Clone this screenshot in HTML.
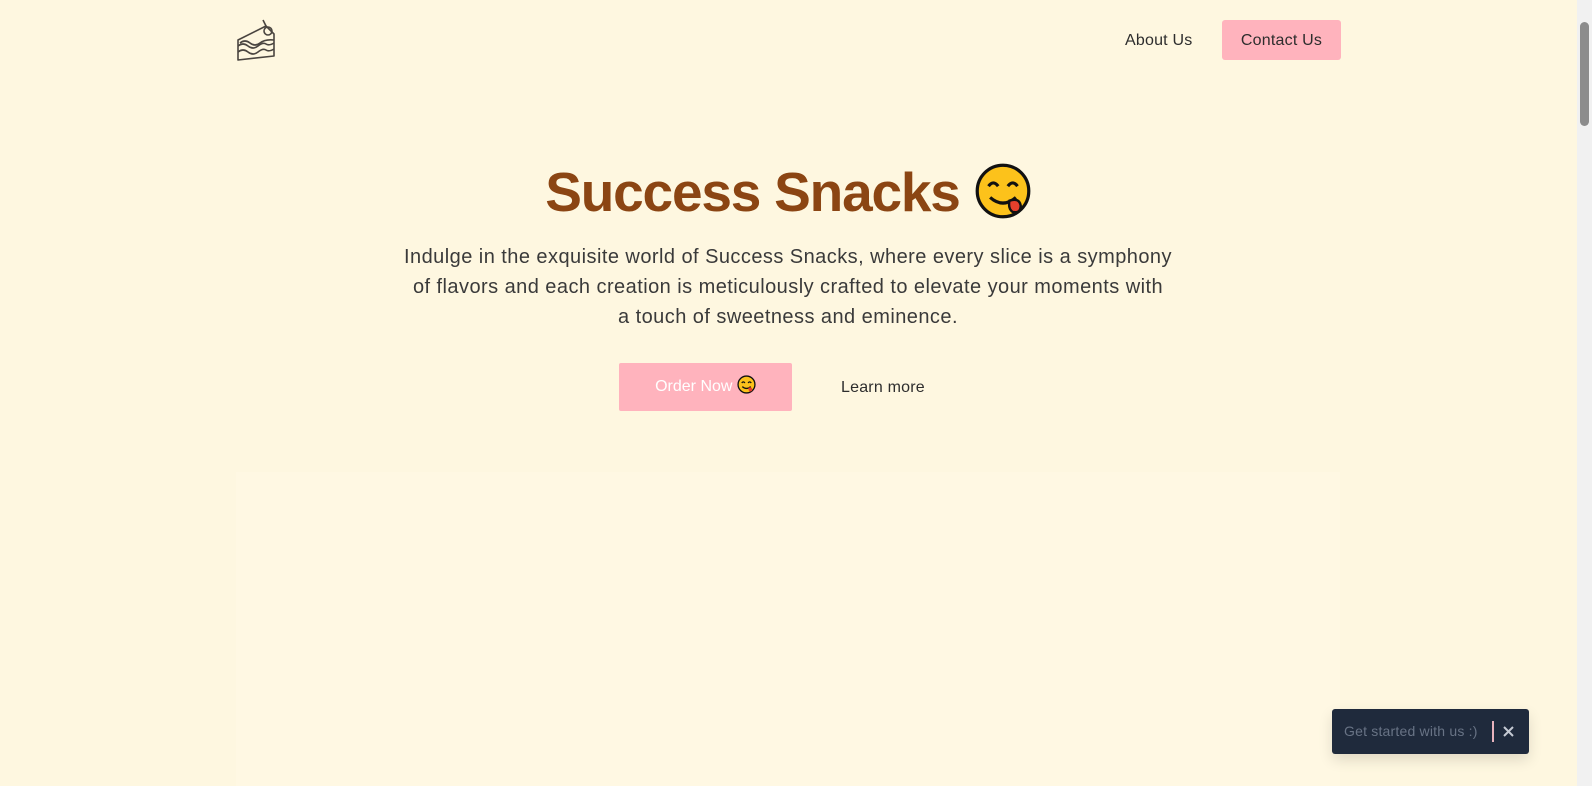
<!DOCTYPE html>
<html><head><meta charset="utf-8"><style>
html,body{margin:0;padding:0}
body{width:1592px;height:786px;overflow:hidden;background:#fef7e0;font-family:"Liberation Sans",sans-serif;position:relative}
.sb{position:absolute;right:0;top:0;width:15px;height:786px;background:#f1f1f1}
.sb .th{position:absolute;left:3px;top:22px;width:9px;height:104px;background:#8c8c8c;border-radius:5px}
.nav a{position:absolute;color:#2d2d2d;font-size:16px;text-decoration:none;letter-spacing:0.2px}
.contact{left:1222px;top:20px;width:119px;height:40px;background:#ffb3bd;border-radius:3px;line-height:41px;text-align:center}
h1{position:absolute;left:0;width:1577px;top:160px;margin:0;text-align:center;font-size:55px;font-weight:bold;color:#8b4513;letter-spacing:-1.2px}
p{position:absolute;left:338px;width:900px;top:242px;margin:0;text-align:center;font-size:20px;line-height:30px;color:#3a3a3a;letter-spacing:0.45px;white-space:nowrap}
.order{position:absolute;left:619px;top:363px;width:173px;height:48px;background:#ffb3bd;border-radius:2px;color:#fff;font-size:16px;line-height:48px;text-align:center}
.learn{position:absolute;left:841px;top:379px;font-size:16px;color:#2d2d2d;letter-spacing:0.2px}
.panel{position:absolute;left:236px;top:472px;width:1104px;height:314px;background:#fff8e3}
.toast{position:absolute;left:1332px;top:709px;width:197px;height:45px;background:#1f2a3c;border-radius:3px;box-shadow:0 6px 14px rgba(0,0,0,.12)}
.toast span{position:absolute;left:12px;top:14px;font-size:14px;color:#687385;letter-spacing:0.2px}
.toast i{position:absolute;left:160px;top:12px;width:2px;height:21px;background:#e8b3bd}
</style></head><body>
<div class="panel"></div>
<svg style="position:absolute;left:236px;top:18px" width="42" height="44" viewBox="0 0 42 44" fill="none" stroke="#4a4540" stroke-width="1.6" stroke-linejoin="round">
<path d="M2 22 L30 8 L38 16 L38 38 L2 42 Z"/>
<circle cx="32" cy="13" r="4"/><path d="M30 8 L27 2"/>
<path d="M2 28 q5-4 10 0 t10 0 t8-2 t8-1"/>
<path d="M2 34 q5-4 10 0 t10 0 t8-2 t8-1"/>
<path d="M4 25 q5-4 10 0 t10 0 t14-3"/>
</svg>
<div class="nav"><a style="left:1125px;top:32px">About Us</a><a class="contact">Contact Us</a></div>
<h1>Success Snacks <svg width="58" height="58" viewBox="0 0 36 36" style="vertical-align:-9px"><circle cx="18" cy="18" r="16" fill="#fcc21b" stroke="#111" stroke-width="2"/><path d="M9 15 q3-4 6 0 M21 15 q3-4 6 0" stroke="#111" stroke-width="2" fill="none"/><path d="M10 22 q8 7 16 0" stroke="#111" stroke-width="2" fill="none"/><path d="M22 24 q6-2 7 3 q0 5-5 4 q-3-2-2-7z" fill="#e8402c" stroke="#111" stroke-width="1.5"/></svg></h1>
<p>Indulge in the exquisite world of Success Snacks, where every slice is a symphony<br>of flavors and each creation is meticulously crafted to elevate your moments with<br>a touch of sweetness and eminence.</p>
<div class="order">Order Now <svg width="19" height="19" viewBox="0 0 36 36" style="vertical-align:-3px"><circle cx="18" cy="18" r="16" fill="#fcc21b" stroke="#111" stroke-width="2.5"/><path d="M9 15 q3-4 6 0 M21 15 q3-4 6 0 M10 22 q8 7 16 0" stroke="#111" stroke-width="2.5" fill="none"/><path d="M22 24 q6-2 7 3 q0 5-5 4 q-3-2-2-7z" fill="#e8402c"/></svg></div>
<div class="learn">Learn more</div>
<div class="toast"><span>Get started with us :)</span><i></i><svg style="position:absolute;left:171px;top:17px" width="11" height="11" viewBox="0 0 11 11" stroke="#c5cad3" stroke-width="2"><path d="M1 1L10 10M10 1L1 10"/></svg></div>
<div class="sb"><div class="th"></div></div>
</body></html>
